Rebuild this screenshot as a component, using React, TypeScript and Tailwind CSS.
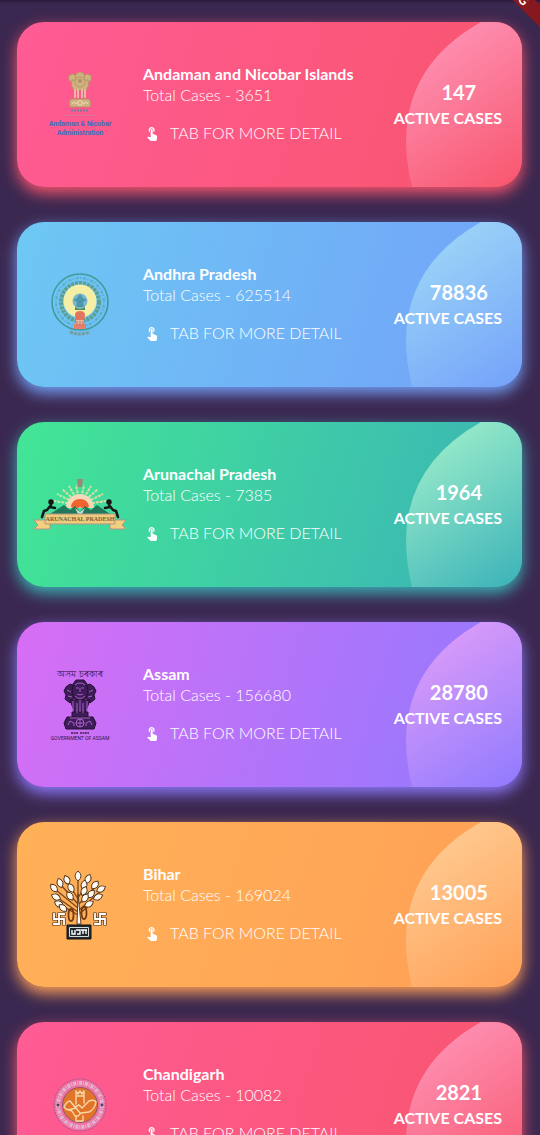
import { MdTouchApp } from "react-icons/md";
import type { ReactElement } from "react";

type Theme = {
  card: string;
  light: string;
  end: string;
};

const themes: Record<string, Theme> = {
  pink: {
    card: "bg-[linear-gradient(108deg,#ff5b95,#f8556d)] shadow-[0_6px_15px_#f8556d]",
    light: "#ff99bd",
    end: "#f8556d",
  },
  blue: {
    card: "bg-[linear-gradient(108deg,#6dc8f3,#73a1f9)] shadow-[0_6px_15px_#73a1f9]",
    light: "#a1dcf7",
    end: "#73a1f9",
  },
  green: {
    card: "bg-[linear-gradient(108deg,#42e695,#3bb2b8)] shadow-[0_6px_15px_#3bb2b8]",
    light: "#a5f3cc",
    end: "#3bb2b8",
  },
  purple: {
    card: "bg-[linear-gradient(108deg,#d76ef5,#8f7afe)] shadow-[0_6px_15px_#8f7afe]",
    light: "#e5a0f8",
    end: "#8f7afe",
  },
  orange: {
    card: "bg-[linear-gradient(108deg,#ffb157,#ffa057)] shadow-[0_6px_15px_#ffa057]",
    light: "#ffd099",
    end: "#ffa057",
  },
};

function AndamanEmblem() {
  return (
    <div className="flex flex-col items-center">
      <svg width="26" height="44" viewBox="0 0 26 44" aria-hidden="true">
        <g fill="#cfb280" stroke="#b08a5c" strokeWidth="0.7">
          <circle cx="5.500" cy="7" r="4" />
          <circle cx="20.500" cy="7" r="4" />
          <path d="M5 9 Q3 15 7 19 H19 Q23 15 21 9Z" />
          <circle cx="13" cy="5.500" r="4.500" />
          <circle cx="13" cy="11" r="5" />
          <path d="M8 18v9M11 18v9M15 18v9M18 18v9" stroke="#e6cfa6" strokeWidth="1.600" />
          <path d="M4 28h18q3 3 1 8H3q-2-5 1-8Z" />
        </g>
        <circle cx="13" cy="10" r="2" fill="#b08f62" />
        <g fill="none" stroke="#f3d9c0">
          <circle cx="13" cy="32" r="2.400" />
          <path d="M5 33l2-2 3 2M16 33l3-2 2 2" />
        </g>
        <path d="M4 39.500h18" stroke="#6b7fa0" strokeWidth="1.800" strokeDasharray="2 1" />
      </svg>
      <div className="h-px w-8 bg-[#e2739b]" />
      <p className="mt-1 text-center font-['Roboto',sans-serif] text-[7px] leading-[9px] font-bold text-[#3d6cc0]">
        Andaman &amp; Nicobar
        <br />
        Administration
      </p>
    </div>
  );
}

function AndhraEmblem() {
  return (
    <svg width="60" height="64" viewBox="0 0 60 64" aria-hidden="true">
      <g fill="none" stroke="#3f9c9b">
        <circle cx="30" cy="29" r="28" strokeWidth="1.600" />
        <circle cx="30" cy="29" r="24" strokeWidth="2" strokeDasharray="1 2 3 1.500" opacity="0.5" />
        <circle cx="30" cy="29" r="19" stroke="#5c9f8f" strokeWidth="4" strokeDasharray="3 1" />
      </g>
      <circle cx="30" cy="28" r="16.500" fill="#f5efa5" />
      <circle cx="30" cy="28" r="7.500" fill="#7bb7cf" />
      <path d="M30 21l3 4 4 2-4 2 1 5h-8l1-5-4-2 4-2z" fill="#4a97ac" />
      <path d="M25 34q5 3 10 0v3H25z" fill="#548d65" />
      <path d="M25 42q0-4 5-4t5 4l-1 6h-8z" fill="#e3755f" />
      <path d="M26 47h8v5h-8z" fill="#e7b5a0" />
      <path d="M24 51h12v5H24z" fill="#e3806c" />
      <path d="M27 48v4M30 48v4M33 48v4" stroke="#d2705f" />
      <path d="M20 59q10 4 20 0" fill="none" stroke="#6e9fa5" strokeWidth="3" strokeDasharray="3 1" />
    </svg>
  );
}

function ArunachalEmblem() {
  return (
    <svg width="94" height="54" viewBox="0 0 94 54" aria-hidden="true">
      <g stroke="#d7dfa3" strokeWidth="2" strokeDasharray="3 1">
        <path d="M47 27L21 23M47 27L24 16M47 27L29 11M47 27L36 8M47 27L43 7M47 27L51 7M47 27L58 8M47 27L65 11M47 27L70 16M47 27L73 23" />
      </g>
      <path d="M44 1h6l-1 8h-4z" fill="#9a8a75" />
      <path d="M33 30a14 14 0 0 1 28 0z" fill="#f6d9b8" />
      <path d="M38 29q1-8 9-8t9 8l-4 2-5-2-5 2z" fill="#f0642f" />
      <path d="M17 36l14-9 6 5 5-4 5 6 5-6 6 4 6-5 13 9z" fill="#22785b" />
      <path d="M42 30l5 4 5-4-3 6h-4z" fill="#b9ddcf" />
      <g fill="none" stroke="#171717" strokeWidth="2.500" strokeLinecap="round" strokeLinejoin="round">
        <circle cx="18" cy="24" r="1.500" fill="#171717" />
        <path d="M18 27l-4 5-3 1-2 6M17 29l5 1" />
        <circle cx="76" cy="24" r="1.500" fill="#171717" />
        <path d="M76 27l4 5 3 1 2 6M77 29l-5 1" />
      </g>
      <path d="M1 42h16v9H1l4-4zM93 42H77v9h16l-4-4z" fill="#f4cf7d" stroke="#b0948a" />
      <path d="M12 36h70v10H12z" fill="#efcb7c" stroke="#b0948a" />
      <text
        x="47"
        y="43"
        textAnchor="middle"
        fill="#766140"
        className="font-['Liberation_Serif',serif] text-[6px] font-bold"
      >
        ARUNACHAL PRADESH
      </text>
    </svg>
  );
}

function AssamEmblem() {
  return (
    <div className="flex flex-col items-center text-[#331342]">
      <p className="font-['Noto_Sans',sans-serif] text-[9px] leading-[11px] font-medium">অসম চৰকাৰ</p>
      <svg width="34" height="56" viewBox="0 0 34 56" aria-hidden="true">
        <g fill="#3e1c59" stroke="#26102f">
          <path d="M3 8l4-3 5 2-1 12-4 5-5-4 1-4-2-4zM31 8l-4-3-5 2 1 12 4 5 5-4-1-4 2-4z" />
          <path d="M10 5l3-4h8l3 4 1 9-4 8h-8l-4-8z" />
          <path d="M7 21h20l-3 8-2 6H12l-2-6z" />
          <path d="M4 38h26l3 6-2 6H3l-2-6z" />
          <path d="M9 33h16v5H9z" />
        </g>
        <g fill="none" stroke="#b36ad1" strokeWidth="0.900">
          <path d="M12 6q5-4 10 0M13 9h3M18 9h3M17 9v4M14 15q3 2 6 0M12 17q5 5 10 0M4 11l4 2M30 11l-4 2M5 17l4 1M29 17l-4 1M10 22v10M14 24v10M20 24v10M24 22v10M17 21v12" />
          <circle cx="17" cy="44" r="4" />
          <path d="M17 40v8M13 44h8M5 46l2-4 4 2v3M23 47v-3l4-2 2 4M7 39h20" />
        </g>
        <path d="M8 54h7M17 54h9" stroke="#43204f" strokeWidth="1.300" strokeDasharray="2 0.500" />
      </svg>
      <p className="font-['Roboto',sans-serif] text-[5px] leading-[6px]">GOVERNMENT OF ASSAM</p>
    </div>
  );
}

const leaves: [number, number, number][] = [
  [26, 6, 0], [15, 10, -25], [36, 9, 22], [8, 13, -18], [2, 18, -40], [19, 18, -30],
  [32, 15, 12], [43, 15, 40], [32, 21, 25], [18, 26, -35], [4, 27, -65], [49, 19, 62],
  [39, 24, 40], [46, 27, 68], [7, 34, -65], [33, 28, 35], [37, 34, 62], [11, 38, -50],
];

function BiharEmblem() {
  return (
    <svg width="56" height="70" viewBox="0 0 56 70" className="overflow-visible" aria-hidden="true">
      <g fill="none" stroke="#7c4516" strokeWidth="1.300">
        <path d="M26 54V7M26 29L16 12M26 34L9 15M26 28L36 11M26 38L4 20M26 35L44 16M26 42L6 28M27 40L49 21M26 45L9 35M27 44L38 35" />
      </g>
      <path d="M25 54l1-30 3 30z" fill="#fff" stroke="#5f3b1c" />
      <g fill="#fffaf0" stroke="#48301d" strokeWidth="0.900">
        {leaves.map(([x, y, angle]) => (
          <path key={`${x}-${y}`} d="M0-5Q6 0 0 5Q-6 0 0-5Z" transform={`translate(${x} ${y}) rotate(${angle})`} />
        ))}
      </g>
      <g fill="none" stroke="#743814" strokeWidth="1.800">
        <ellipse cx="19" cy="45" rx="2.500" ry="6" />
        <ellipse cx="32" cy="43" rx="2.500" ry="6" />
      </g>
      {[7, 48].map((x) => (
        <g key={x} transform={`translate(${x} 49)`} fill="none" strokeLinecap="square">
          <path d="M0-5V5M-5 0H5M0-5H5M5 0V5M0 5H-5M-5 0V-5" stroke="#3c2a1e" strokeWidth="3.200" />
          <path d="M0-5V5M-5 0H5M0-5H5M5 0V5M0 5H-5M-5 0V-5" stroke="#fff" strokeWidth="1.800" />
        </g>
      ))}
      <path d="M15 55h24v14H15z" fill="#202a31" stroke="#111" />
      <path d="M17.500 57.500h19v9h-19z" fill="none" stroke="#d8d8d8" />
      <path d="M20 60v4h3v-4M24 60h4v4h-3M29 60h6M31 60v4M34 60v4" fill="none" stroke="#fff" strokeWidth="1.400" />
    </svg>
  );
}

function ChandigarhEmblem() {
  return (
    <svg width="54" height="54" viewBox="0 0 54 54" aria-hidden="true">
      <circle cx="27" cy="27" r="26" fill="#ef72a2" stroke="#a55388" strokeDasharray="2 1" />
      <circle cx="27" cy="27" r="22" fill="none" stroke="#dfb6d2" strokeWidth="4" strokeDasharray="3 1 1 1" />
      <circle cx="27" cy="27" r="17.500" fill="#e2742a" stroke="#8d5571" />
      <g fill="none" stroke="#f8d8a6" strokeWidth="1.400" strokeLinejoin="round" strokeLinecap="round">
        <path d="M23 26V13l2 3 2-3 2 3 2-3v12M23 18h8" />
        <path d="M11 29q3-6 6-6l5 6 4-2 3 3 7-7q5-2 7 1-1 7-7 10l-8 1-3 3H22l-3-5-6-2zM15 32l8-2 4 5M23 38v5h7v-5" />
      </g>
      <circle cx="5" cy="27" r="1.500" fill="#504560" />
      <circle cx="49" cy="27" r="1.500" fill="#504560" />
    </svg>
  );
}

type Region = {
  name: string;
  total: number;
  active: number;
  theme: string;
  Emblem: () => ReactElement;
};

const regions: Region[] = [
  { name: "Andaman and Nicobar Islands", total: 3651, active: 147, theme: "pink", Emblem: AndamanEmblem },
  { name: "Andhra Pradesh", total: 625514, active: 78836, theme: "blue", Emblem: AndhraEmblem },
  { name: "Arunachal Pradesh", total: 7385, active: 1964, theme: "green", Emblem: ArunachalEmblem },
  { name: "Assam", total: 156680, active: 28780, theme: "purple", Emblem: AssamEmblem },
  { name: "Bihar", total: 169024, active: 13005, theme: "orange", Emblem: BiharEmblem },
  { name: "Chandigarh", total: 10082, active: 2821, theme: "pink", Emblem: ChandigarhEmblem },
];

function RegionCard({ region, index }: { region: Region; index: number }) {
  const theme = themes[region.theme];
  const { Emblem } = region;
  const gradientId = `curve-${index}`;
  return (
    <li className={`relative flex h-[165px] shrink-0 items-center rounded-[27px] pr-5 text-white ${theme.card}`}>
      <svg
        className="absolute inset-y-0 right-0 overflow-visible"
        width="110"
        height="165"
        viewBox="0 0 110 165"
        aria-hidden="true"
      >
        <defs>
          <linearGradient id={gradientId} gradientUnits="userSpaceOnUse" x1="0" y1="0" x2="110" y2="165">
            <stop stopColor={theme.light} />
            <stop offset="1" stopColor={theme.end} />
          </linearGradient>
        </defs>
        <path
          d="M0 165H83A27 27 0 0 0 110 138V27A27 27 0 0 0 83 0H69Q-27 54 0 165Z"
          fill={`url(#${gradientId})`}
        />
      </svg>
      <div className="flex w-[126px] shrink-0 justify-center">
        <Emblem />
      </div>
      <div className="min-w-0 flex-1 pb-[3px]">
        <h2 className="text-[16px] leading-[21px] font-bold whitespace-nowrap">{region.name}</h2>
        <p className="text-[16px] leading-[21px] font-light">Total Cases - {region.total}</p>
        <button
          type="button"
          className="mt-[17px] flex items-center gap-[9px] text-[16px] leading-[21px] font-light whitespace-nowrap"
        >
          <span className="flex w-[18px] justify-center">
            <MdTouchApp size={16} aria-hidden="true" />
          </span>
          TAB FOR MORE DETAIL
        </button>
      </div>
      <div className="relative shrink-0 text-center font-bold">
        <p className="pl-[22px] text-[20px] leading-[25px]">{region.active}</p>
        <p className="text-[16px] leading-[25px]">ACTIVE CASES</p>
      </div>
    </li>
  );
}

export default function App() {
  return (
    <main className="relative h-screen overflow-hidden bg-[#3b2850] font-['Lato',sans-serif]">
      <div className="h-full overflow-y-auto [scrollbar-width:none]">
        <ul className="flex flex-col gap-[35px] pt-[22px] pr-[18px] pb-[35px] pl-[17px]">
          {regions.map((region, index) => (
            <RegionCard key={region.name} region={region} index={index} />
          ))}
        </ul>
      </div>
      <div className="absolute inset-x-0 top-0 h-1 bg-linear-to-b from-[#29193a] to-transparent" />
      <div className="absolute -top-[21px] -right-[35px] flex h-4 w-32 rotate-45 items-center justify-center bg-[#871820] text-[13px] leading-4 font-bold text-white">
        DEBUG
      </div>
    </main>
  );
}
